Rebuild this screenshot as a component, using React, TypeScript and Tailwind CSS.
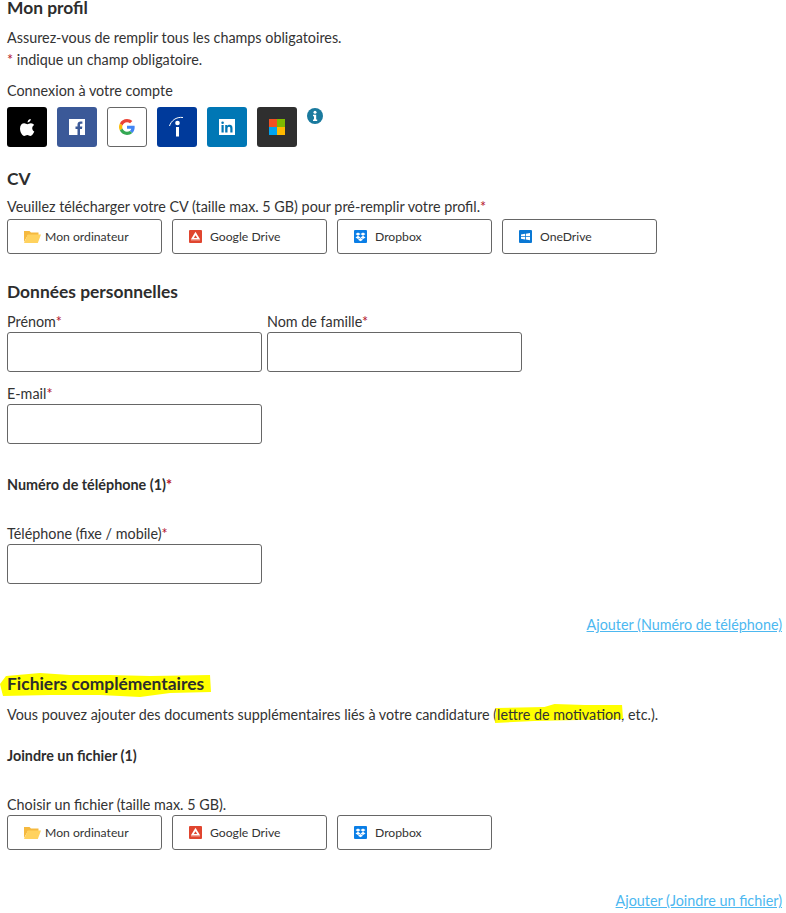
import React from "react";

const font = { fontFamily: 'Lato, sans-serif' };

function Req() {
  return <span className="text-[#b3132b]">*</span>;
}

function FolderIcon() {
  return (
    <svg width="17" height="13" viewBox="0 0 17 13">
      <path d="M0 1h5.500l1.500 1.500H14.500V5H4L0 12z" fill="#f5b93f" />
      <path d="M3.800 4.500H17L13.800 13H0z" fill="#ffd25e" />
    </svg>
  );
}

function DriveIcon() {
  return (
    <svg width="13" height="13" viewBox="0 0 13 13">
      <rect width="13" height="13" rx="1" fill="#e0452f" />
      <path d="M6.500 1.800l4.700 7.700H1.800z" fill="#fff" />
      <path d="M6.500 5.300L4.800 8h3.400z" fill="#e0452f" />
      <path d="M2 10.200h9" stroke="#f5b5ab" strokeWidth=".6" />
    </svg>
  );
}

function DropboxIcon() {
  return (
    <svg width="13" height="13" viewBox="0 0 13 13">
      <rect width="13" height="13" rx="1" fill="#0a7ee6" />
      <path d="M4 2.500l2.500 1.600L4 5.800 1.500 4.100zM9 2.500l2.500 1.600L9 5.800 6.500 4.100zM4 5.800l2.500 1.700L4 9.100 1.500 7.500zM9 5.800l2.500 1.700L9 9.100 6.500 7.500zM4 9.700l2.500-1.600L9 9.700l-2.500 1.600z" fill="#fff" />
    </svg>
  );
}

function OneDriveIcon() {
  return (
    <svg width="13" height="13" viewBox="0 0 13 13">
      <rect width="13" height="13" rx="1" fill="#0a78d4" />
      <path d="M2 4.500l4-.7v2.400H2zM6.800 3.700L11 3v3.200H6.800zM2 7h4v2.400l-4-.7zM6.800 7H11v3.200l-4.200-.7z" fill="#fff" />
    </svg>
  );
}

function UploadButton({ icon, label }: { icon: React.ReactNode; label: string }) {
  return (
    <button className="flex h-[35px] w-[155px] items-center rounded-[3px] border border-[#666] bg-white text-[12.2px] text-[#333]">
      <span className="ml-4 flex w-[21px] shrink-0 items-center">{icon}</span>
      {label}
    </button>
  );
}

function Field({ label, required = true }: { label: string; required?: boolean }) {
  return (
    <div className="w-[255px]">
      <label className="block h-5 leading-5 text-[#333]">
        {label}
        {required && <Req />}
      </label>
      <input className="block h-10 w-full rounded-[3px] border border-[#666] bg-white" />
    </div>
  );
}

function Social({ className, children }: { className: string; children: React.ReactNode }) {
  return (
    <div className={`flex h-10 w-10 items-center justify-center rounded-[3px] ${className}`}>
      {children}
    </div>
  );
}

function Heading({ children, className = "" }: { children: React.ReactNode; className?: string }) {
  return <h2 className={`text-[17.4px] leading-4 font-bold text-[#2d2d2d] ${className}`}>{children}</h2>;
}

export default function App() {
  return (
    <div className="h-[913px] overflow-hidden bg-white px-[7px] text-[14.35px] leading-5 text-[#333]" style={font}>
      <Heading>Mon profil</Heading>
      <p className="mt-3">Assurez-vous de remplir tous les champs obligatoires.</p>
      <p className="mt-0.5"><Req /> indique un champ obligatoire.</p>
      <p className="mt-[11px]">Connexion à votre compte</p>

      <div className="mt-[6px] flex gap-[10px]">
        <Social className="bg-black">
          <svg width="15" height="17" viewBox="0 0 15 17" fill="#fff">
            <path d="M10.800 0c.1 1.800-1.500 3.500-3.200 3.400C7.400 1.700 9.100.1 10.800 0zM14.300 12.500c-.9 2.100-2.300 4.400-3.900 4.400-1.300 0-1.700-.8-3.100-.8s-1.900.8-3.100.8C2.300 16.900 0 13 0 9.500 0 6.200 2.100 4.300 4.200 4.300c1.300 0 2.400.9 3.200.9.800 0 2.100-1 3.600-.9 1.200.1 2.400.6 3.100 1.700-2.700 1.700-2.300 5.300.2 6.500z" />
          </svg>
        </Social>
        <Social className="bg-[#3b5998]">
          <svg width="16" height="16" viewBox="0 0 16 16">
            <rect width="16" height="16" fill="#fff" />
            <path d="M11 16V10h2l.3-2.500H11V6c0-.7.3-1.200 1.200-1.200h1.200V2.600C13 2.500 12.300 2.500 11.500 2.500 9.700 2.500 8.500 3.600 8.500 5.600v1.900H6.500V10h2v6z" fill="#3b5998" />
          </svg>
        </Social>
        <Social className="border border-[#666] bg-white">
          <svg width="16" height="16" viewBox="0 0 48 48">
            <path fill="#ea4335" d="M24 9.500c3.500 0 6.700 1.200 9.200 3.600l6.800-6.800C35.900 2.400 30.500 0 24 0 14.600 0 6.500 5.400 2.600 13.200l8 6.200C12.400 13.700 17.700 9.500 24 9.500z" />
            <path fill="#4285f4" d="M47 24.500c0-1.600-.1-3.100-.4-4.500H24v9h12.900c-.6 3-2.200 5.500-4.800 7.200l7.700 6C44.300 38 47 31.800 47 24.500z" />
            <path fill="#fbbc05" d="M10.500 28.600c-.5-1.400-.8-3-.8-4.600s.3-3.200.8-4.600l-8-6.200C.9 16.500 0 20.100 0 24s.9 7.500 2.600 10.800z" />
            <path fill="#34a853" d="M24 48c6.500 0 11.900-2.100 15.900-5.800l-7.700-6c-2.200 1.500-4.900 2.300-8.200 2.300-6.300 0-11.600-4.200-13.500-9.900l-8 6.200C6.500 42.600 14.600 48 24 48z" />
          </svg>
        </Social>
        <Social className="bg-[#003a9b]">
          <svg width="16" height="24" viewBox="0 0 16 24" fill="none">
            <path d="M.5 11C2 6 7 1.500 14 2.500" stroke="#fff" strokeWidth="1" />
            <circle cx="8.500" cy="8" r="2.300" fill="#fff" />
            <rect x="7" y="12" width="3" height="9.500" fill="#fff" />
          </svg>
        </Social>
        <Social className="bg-[#0077b5]">
          <svg width="16" height="16" viewBox="0 0 16 16">
            <rect width="16" height="16" fill="#fff" />
            <path d="M2.500 6h2.200v7.500H2.500zM3.600 2.500a1.300 1.300 0 110 2.600 1.300 1.300 0 010-2.600zM6.200 6h2.100v1c.4-.7 1.200-1.200 2.300-1.200 2.200 0 2.900 1.400 2.900 3.400v4.300h-2.200V9.700c0-1-.2-1.900-1.300-1.900s-1.500.8-1.500 1.900v3.800H6.200z" fill="#0077b5" />
          </svg>
        </Social>
        <Social className="bg-[#2f2f2f]">
          <div className="grid h-4 w-4 grid-cols-2 grid-rows-2">
            <span className="bg-[#f25022]" />
            <span className="bg-[#7fba00]" />
            <span className="bg-[#00a4ef]" />
            <span className="bg-[#ffb900]" />
          </div>
        </Social>
        <svg className="mt-px" width="16" height="16" viewBox="0 0 16 16">
          <circle cx="8" cy="8" r="8" fill="#1a7a9e" />
          <circle cx="8" cy="4.300" r="1.500" fill="#fff" />
          <path d="M6 6.800h3.200v4.700h1v1.400H6v-1.400h1V8.200H6z" fill="#fff" />
        </svg>
      </div>

      <Heading className="mt-6">CV</Heading>
      <p className="mt-[10px]">
        Veuillez télécharger votre CV (taille max. 5 GB) pour pré-remplir votre profil.<Req />
      </p>
      <div className="mt-[2px] flex gap-[10px]">
        <UploadButton icon={<FolderIcon />} label="Mon ordinateur" />
        <UploadButton icon={<DriveIcon />} label="Google Drive" />
        <UploadButton icon={<DropboxIcon />} label="Dropbox" />
        <UploadButton icon={<OneDriveIcon />} label="OneDrive" />
      </div>

      <Heading className="mt-[30px]">Données personnelles</Heading>
      <div className="mt-[12px] flex gap-[5px]">
        <Field label="Prénom" />
        <Field label="Nom de famille" />
      </div>
      <div className="mt-[12px]">
        <Field label="E-mail" />
      </div>

      <p className="mt-[31px] font-bold text-[#2d2d2d]">Numéro de téléphone (1)<Req /></p>
      <div className="mt-[29px]">
        <Field label="Téléphone (fixe / mobile)" />
      </div>
      <div className="mt-[31px] mr-[-3px] text-right">
        <a className="text-[#4db8f0] underline">Ajouter (Numéro de téléphone)</a>
      </div>

      <div className="mt-[40px]">
        <Heading className="relative isolate inline-block">
          <svg className="absolute -top-[4px] -left-[7px] -z-10" width="211" height="26" viewBox="0 0 211 26">
            <path d="M6 4L40 1 70 3 110 3 150 4 210 3 211 20 170 21 140 25 100 23 50 23 3 24 0 12z" fill="#ffff00" />
          </svg>
          Fichiers complémentaires
        </Heading>
      </div>
      <p className="mt-[10px]">
        Vous pouvez ajouter des documents supplémentaires liés à votre candidature (
        <span className="relative isolate inline-block">
          <svg className="absolute -top-[1px] -left-[3px] -z-10 h-[20px] w-[calc(100%+5px)]" viewBox="0 0 128 20" preserveAspectRatio="none">
            <path d="M2 4L50 3 60 0 90 1 127 1 128 15 40 17 1 19z" fill="#ffff00" />
          </svg>
          lettre de motivation
        </span>
        , etc.).
      </p>

      <p className="mt-[21px] font-bold text-[#2d2d2d]">Joindre un fichier (1)</p>
      <p className="mt-[29px]">Choisir un fichier (taille max. 5 GB).</p>
      <div className="flex gap-[10px]">
        <UploadButton icon={<FolderIcon />} label="Mon ordinateur" />
        <UploadButton icon={<DriveIcon />} label="Google Drive" />
        <UploadButton icon={<DropboxIcon />} label="Dropbox" />
      </div>
      <div className="mt-[41px] mr-[-3px] text-right">
        <a className="text-[#4db8f0] underline">Ajouter (Joindre un fichier)</a>
      </div>
    </div>
  );
}
